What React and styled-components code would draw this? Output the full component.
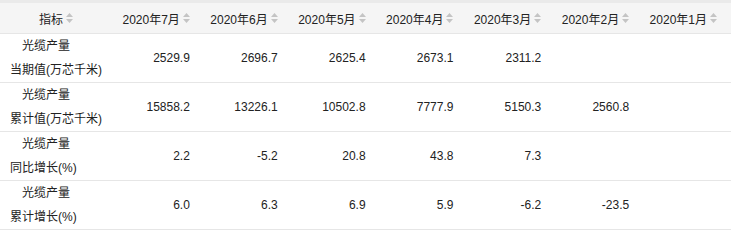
import React from "react";
import styled, { createGlobalStyle } from "styled-components";

const Global = createGlobalStyle`
  html, body { margin: 0; padding: 0; background: #fff; }
  body { font-family: "Liberation Sans", Arial, "Noto Sans CJK SC", sans-serif; font-size: 12px; color: #333; }
`;

const Table = styled.div`
  width: 731px;
  border-top: 3px solid #eaeaea;
`;

const Row = styled.div`
  display: grid;
  grid-template-columns: 116px repeat(7, minmax(0, 1fr));
  border-bottom: 1px solid #e6e6e6;
  background: ${(p) => (p.$head ? "#f5f5f5" : "#fff")};
  height: ${(p) => (p.$head ? "30px" : "48px")};
`;

const HeadCell = styled.div`
  display: flex;
  align-items: center;
  justify-content: ${(p) => (p.$center ? "center" : "flex-end")};
  padding: ${(p) => (p.$center ? "0 14px 0 10px" : "0 14px 0 0")};
  gap: 3px;
  color: #222;
  white-space: nowrap;
`;

const NameCell = styled.div`
  padding-left: 10px;
  line-height: 24px;
  color: #222;
  white-space: nowrap;
`;

const Indent = styled.span`
  display: block;
  padding-left: 12px;
`;

const ValueCell = styled.div`
  display: flex;
  align-items: center;
  justify-content: flex-end;
  padding-right: 14px;
  color: #222;
`;

const SortIcon = () => (
  <svg width="7" height="10" viewBox="0 0 7 10" style={{ display: "block", flexShrink: 0 }}>
    <path d="M3.5 0 L7 4 L0 4 Z" fill="#c4c4c4" />
    <path d="M0 6 L7 6 L3.5 10 Z" fill="#c4c4c4" />
  </svg>
);

const months = ["2020年7月", "2020年6月", "2020年5月", "2020年4月", "2020年3月", "2020年2月", "2020年1月"];

const data = [
  { a: "光缆产量", b: "当期值(万芯千米)", v: ["2529.9", "2696.7", "2625.4", "2673.1", "2311.2", "", ""] },
  { a: "光缆产量", b: "累计值(万芯千米)", v: ["15858.2", "13226.1", "10502.8", "7777.9", "5150.3", "2560.8", ""] },
  { a: "光缆产量", b: "同比增长(%)", v: ["2.2", "-5.2", "20.8", "43.8", "7.3", "", ""] },
  { a: "光缆产量", b: "累计增长(%)", v: ["6.0", "6.3", "6.9", "5.9", "-6.2", "-23.5", ""] },
];

export default function App() {
  return (
    <>
      <Global />
      <Table>
        <Row $head>
          <HeadCell $center>
            指标 <SortIcon />
          </HeadCell>
          {months.map((m) => (
            <HeadCell key={m}>
              {m}
              <SortIcon />
            </HeadCell>
          ))}
        </Row>
        {data.map((r, i) => (
          <Row key={i}>
            <NameCell>
              <Indent>{r.a}</Indent>
              {r.b}
            </NameCell>
            {r.v.map((v, j) => (
              <ValueCell key={j}>{v}</ValueCell>
            ))}
          </Row>
        ))}
      </Table>
    </>
  );
}
